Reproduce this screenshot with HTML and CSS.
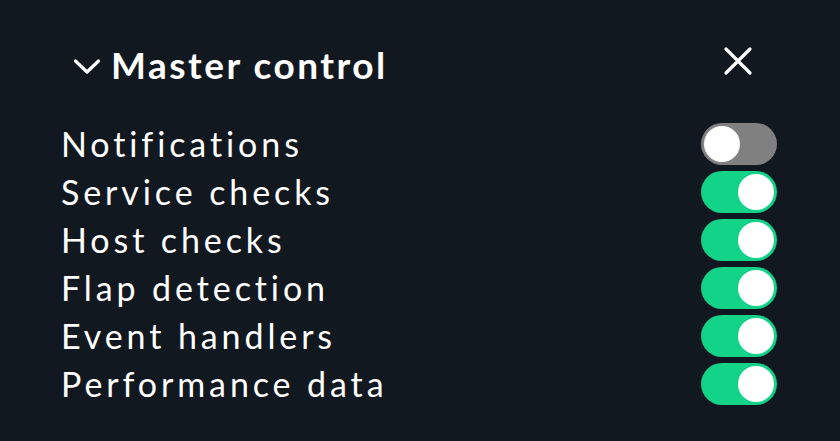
FILE: index.html
```html
<!DOCTYPE html>
<html>
<head>
<meta charset="utf-8">
<link rel="stylesheet" href="styles.css">
</head>
<body>
<div class="panel">
  <div class="header">
    <div class="title">
      <svg class="chevron" width="28" height="18" viewBox="0 0 28 18"><path d="M2.5 3 L14 14 L25.5 3" fill="none" stroke="#fff" stroke-width="3.2" stroke-linecap="round" stroke-linejoin="round"/></svg>
      <span>Master control</span>
    </div>
    <svg class="close" width="30" height="30" viewBox="0 0 30 30"><path d="M3 3 L27 27 M27 3 L3 27" stroke="#fff" stroke-width="3.2" stroke-linecap="round"/></svg>
  </div>
  <div class="rows">
    <div class="row"><span class="label">Notifications</span><span class="toggle off"><span class="knob"></span></span></div>
    <div class="row"><span class="label">Service checks</span><span class="toggle on"><span class="knob"></span></span></div>
    <div class="row"><span class="label">Host checks</span><span class="toggle on"><span class="knob"></span></span></div>
    <div class="row"><span class="label">Flap detection</span><span class="toggle on"><span class="knob"></span></span></div>
    <div class="row"><span class="label">Event handlers</span><span class="toggle on"><span class="knob"></span></span></div>
    <div class="row"><span class="label">Performance data</span><span class="toggle on"><span class="knob"></span></span></div>
  </div>
</div>
</body>
</html>
```
FILE: styles.css
```css
html, body {
  margin: 0;
  padding: 0;
  background: #121820;
  width: 840px;
  height: 441px;
  overflow: hidden;
}
.panel {
  font-family: Lato, "Open Sans", sans-serif;
  color: #fff;
  padding: 39px 63px 0 61px;
}
.header {
  display: flex;
  justify-content: space-between;
  align-items: center;
  height: 50px;
}
.title {
  display: flex;
  align-items: center;
  gap: 10px;
  padding-left: 12px;
  font-size: 37px;
  font-weight: 700;
  letter-spacing: 2.5px;
}
.chevron { margin-top: 5px; }
.close { margin-right: 24px; margin-top: -7px; }
.rows {
  margin-top: 30px;
}
.row {
  display: flex;
  justify-content: space-between;
  align-items: center;
  height: 48px;
}
.label {
  font-size: 34px;
  letter-spacing: 3.9px;
}
.toggle {
  width: 76px;
  height: 42px;
  margin-top: 2px;
  border-radius: 21px;
  display: flex;
  align-items: center;
  padding: 0 3px;
  box-sizing: border-box;
}
.toggle.off { background: #808080; justify-content: flex-start; }
.toggle.on { background: #13d389; justify-content: flex-end; }
.knob {
  width: 36px;
  height: 36px;
  border-radius: 50%;
  background: #fff;
}
```
